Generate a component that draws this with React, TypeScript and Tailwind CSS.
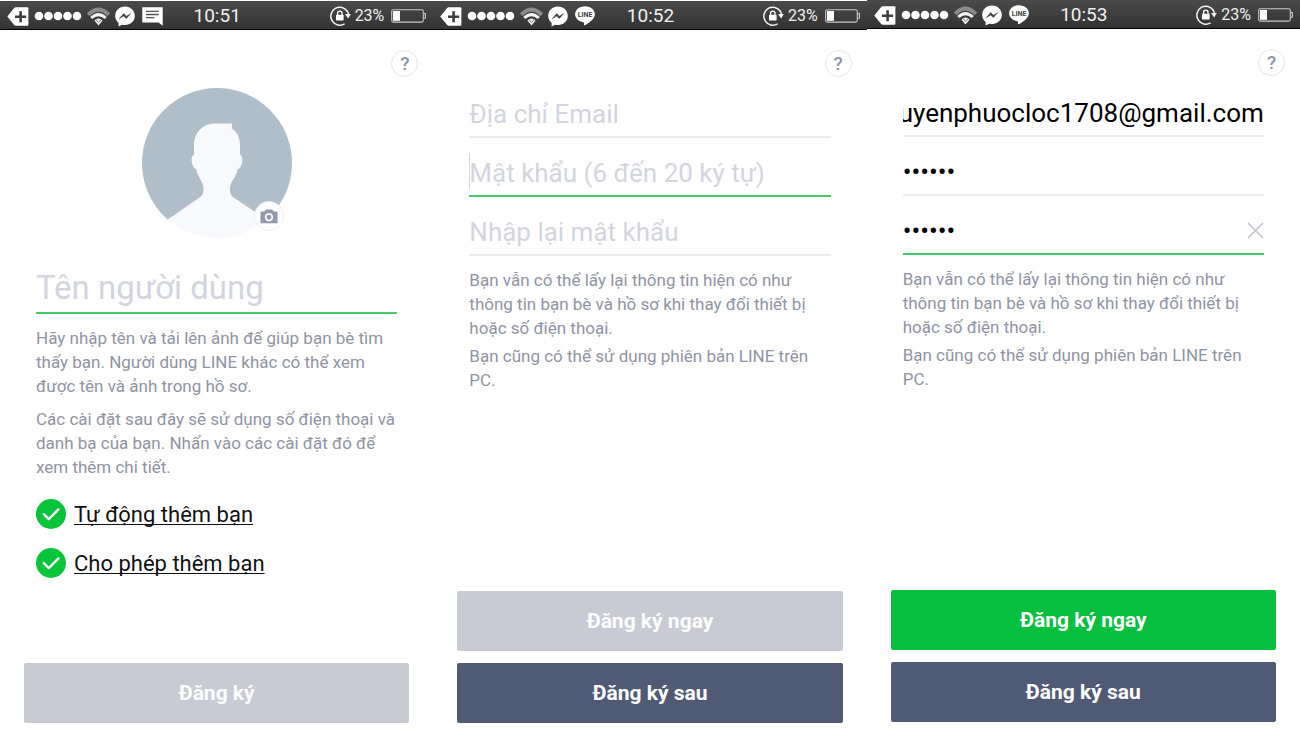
import { useEffect, useId, useRef, useState, type ReactNode } from "react";

function BackPlusIcon() {
  return (
    <svg viewBox="0 0 22 19" className="h-[19px] w-[22px]" aria-hidden="true">
      <path d="M0.3 9.5 7.2 0.9Q7.8 0.2 8.8 0.2H20.4Q21.4 0.2 21.4 1.2V17.8Q21.4 18.8 20.4 18.8H8.8Q7.8 18.8 7.2 18.1Z" fill="#fff" />
      <path d="M13.6 4.2V15.2M8 9.7H19.2" stroke="#3f3f3f" strokeWidth="2.6" />
    </svg>
  );
}

function SignalDots() {
  return (
    <svg viewBox="0 0 48 10" className="h-[10px] w-[48px]" aria-hidden="true">
      {[5, 14.5, 24, 33.5, 43].map((cx) => (
        <circle key={cx} cx={cx} cy="5" r="4.3" fill="#fff" />
      ))}
    </svg>
  );
}

function WifiIcon() {
  return (
    <svg viewBox="0 0 23 19" className="h-[19px] w-[23px]" aria-hidden="true" fill="none">
      <path d="M1.2 7.8Q11.5-2.4 21.8 7.8" stroke="#8b8b8b" strokeWidth="4" />
      <path d="M4.2 11Q11.5 4.2 18.8 11" stroke="#f2f2f2" strokeWidth="3" />
      <path d="M7.4 13.4Q11.5 9.4 15.6 13.4L11.5 18.4Z" fill="#f2f2f2" />
      <path d="M9 12.8 11.5 15.2 14 12.8" stroke="#666" strokeWidth="0.9" />
    </svg>
  );
}

function MessengerIcon() {
  return (
    <svg viewBox="0 0 20 21" className="h-[21px] w-[20px]" aria-hidden="true">
      <path d="M10 0.4C4.5 0.4 0.2 4.5 0.2 9.8 0.2 12.8 1.5 15.2 3.6 16.9V20.6L7 18.7C8 19 9 19.1 10 19.1 15.5 19.1 19.8 15 19.8 9.8 19.8 4.5 15.5 0.4 10 0.4Z" fill="#fff" />
      <path d="M4.4 12.6 8.8 7.6 11.4 10.3 15.6 7.7 11.3 12.5 8.7 9.9Z" fill="#3f3f3f" stroke="#3f3f3f" strokeWidth="0.6" />
    </svg>
  );
}

function MessageIcon() {
  return (
    <svg viewBox="0 0 21 19" className="h-[19px] w-[21px]" aria-hidden="true">
      <path d="M0.3 0.3H20.7V18.7L16.6 15.4H0.3Z" fill="#fff" />
      <path d="M4 4.4H16.8M4 7.5H16.8M4 10.6H12.4" stroke="#555" strokeWidth="1.3" />
    </svg>
  );
}

function LineIcon() {
  return (
    <svg viewBox="0 0 20 20" className="h-[20px] w-[20px]" aria-hidden="true">
      <path d="M10 0.3C4.6 0.3 0.1 3.9 0.1 8.3 0.1 12.3 3.6 15.5 8.4 16.2 9.3 16.4 9.2 17 9 18.4 8.9 19.1 9.3 19.7 10.3 19 13.5 17.2 19.9 13.3 19.9 8.3 19.9 3.9 15.4 0.3 10 0.3Z" fill="#fff" />
      <text x="10" y="10.7" textAnchor="middle" className="fill-[#3f3f3f] font-['Roboto',sans-serif] text-[7px] font-bold">
        LINE
      </text>
    </svg>
  );
}

function RotationLockIcon() {
  return (
    <svg viewBox="0 0 21 20" className="h-[20px] w-[21px]" aria-hidden="true" fill="none">
      <path d="M14.6 17.8A9 9 0 1 1 17.6 5.6" stroke="#f2f2f2" strokeWidth="1.5" />
      <path d="M15 8H20.8L18.2 12.4Z" fill="#f2f2f2" />
      <path d="M16.9 4.6A9 9 0 0 1 18.6 8.6" stroke="#f2f2f2" strokeWidth="1.5" />
      <rect x="6" y="8.8" width="7.6" height="5.6" rx="0.6" fill="#fff" />
      <path d="M7.6 9V7.3A2.2 2.2 0 0 1 12 7.3V9" stroke="#fff" strokeWidth="1.3" />
    </svg>
  );
}

function BatteryIcon() {
  return (
    <svg viewBox="0 0 36 14" className="h-[14px] w-[36px]" aria-hidden="true" fill="none">
      <rect x="0.7" y="0.7" width="31.6" height="12.4" rx="1.6" stroke="#c9c9c9" strokeWidth="1.1" />
      <rect x="2" y="2" width="7" height="9.8" fill="#fff" />
      <path d="M33 4.6H34.4V9.2H33" stroke="#c9c9c9" strokeWidth="1.1" />
    </svg>
  );
}

function StatusBar({ time, notification }: { time: string; notification: ReactNode }) {
  return (
    <header className="grid h-[29px] grid-cols-[1fr_auto_1fr] items-center border-b border-black bg-linear-to-b from-[#4a4a4a] to-[#333] pt-[2px] pr-[6px] pl-[7px] text-[#efefef]">
      <div className="flex items-center gap-[5px]">
        <BackPlusIcon />
        <SignalDots />
        <WifiIcon />
        <MessengerIcon />
        <span className="ml-[2px]">{notification}</span>
      </div>
      <time className="text-[19px] leading-6">{time}</time>
      <div className="flex items-center justify-end">
        <RotationLockIcon />
        <span className="mr-[7px] ml-1 text-[16px] leading-6">23%</span>
        <BatteryIcon />
      </div>
    </header>
  );
}

function Phone({
  time,
  notification,
  edge,
  actions,
  children,
}: {
  time: string;
  notification: ReactNode;
  edge: "top" | "bottom";
  actions: ReactNode;
  children: ReactNode;
}) {
  return (
    <section className={edge === "top" ? "flex min-w-0 flex-col pt-px" : "flex min-w-0 flex-col pb-px"}>
      <StatusBar time={time} notification={notification} />
      <div className="flex justify-end pt-5 pr-[15px]">
        <button
          type="button"
          aria-label="?"
          className="flex size-[27px] items-center justify-center rounded-full border border-[#e3e4ea] text-[19px] leading-6 font-medium text-[#9095a6]"
        >
          ?
        </button>
      </div>
      <div className="flex flex-1 flex-col px-9">{children}</div>
      <div className="flex flex-col gap-3 px-6 pb-[13px]">{actions}</div>
    </section>
  );
}

function ActionButton({ tone, children }: { tone: "muted" | "green" | "navy"; children: ReactNode }) {
  const tones = {
    muted: "bg-[#c8cad4]",
    green: "bg-[#07bf3f]",
    navy: "bg-[#505a75]",
  };
  return (
    <button type="button" className={`h-[60px] w-full rounded-[2px] text-[21px] leading-6 font-bold text-white ${tones[tone]}`}>
      {children}
    </button>
  );
}

function Field({
  label,
  type = "text",
  value = "",
  active = false,
  caret = false,
  clearable = false,
}: {
  label: string;
  type?: string;
  value?: string;
  active?: boolean;
  caret?: boolean;
  clearable?: boolean;
}) {
  const [text, setText] = useState(value);
  const ref = useRef<HTMLInputElement>(null);

  // Long values show their end, as they do right after typing.
  useEffect(() => {
    if (ref.current) ref.current.scrollLeft = ref.current.scrollWidth;
  }, []);

  return (
    <div className={`relative flex h-[59px] items-center border-b-2 pt-3 ${active ? "border-[#41c96b]" : "border-[#ececef]"}`}>
      {caret && <span className="absolute top-[15px] left-0 h-9 w-px bg-[#d5d6dc]" />}
      <input
        ref={ref}
        type={type}
        aria-label={label}
        placeholder={label}
        value={text}
        onChange={(e) => setText(e.target.value)}
        className="h-10 w-full min-w-0 flex-1 bg-transparent text-[26px] text-black outline-none placeholder:text-[#d3d5de]"
      />
      {clearable && (
        <button type="button" aria-label="×" onClick={() => setText("")}>
          <svg viewBox="0 0 17 17" className="size-[17px]" aria-hidden="true">
            <path d="M1 1 16 16M16 1 1 16" stroke="#c3c5d0" strokeWidth="1.7" />
          </svg>
        </button>
      )}
    </div>
  );
}

function Notes({ children }: { children: ReactNode }) {
  return <div className="text-[17px] leading-6 text-[#8f93a3]">{children}</div>;
}

function Option({ children }: { children: ReactNode }) {
  const id = useId();
  const [checked, setChecked] = useState(true);
  return (
    <div className="flex items-center gap-2">
      <span className="relative size-[30px]">
        <input
          id={id}
          type="checkbox"
          checked={checked}
          onChange={(e) => setChecked(e.target.checked)}
          className="block size-[30px] appearance-none rounded-full bg-[#c8cad4] checked:bg-[#07c53b]"
        />
        <svg viewBox="0 0 30 30" className="pointer-events-none absolute inset-0" aria-hidden="true">
          <path d="M7.8 15.2 12.8 20.2 22.4 10.4" fill="none" stroke="#fff" strokeWidth="2.4" strokeLinecap="round" strokeLinejoin="round" />
        </svg>
      </span>
      <label
        htmlFor={id}
        className="pt-[2px] text-[22px] leading-7 text-[#111] underline decoration-1 underline-offset-[2px] [text-decoration-skip-ink:none]"
      >
        {children}
      </label>
    </div>
  );
}

function Avatar() {
  return (
    <div className="relative mt-[11px] size-[150px] self-center">
      <svg viewBox="0 0 150 150" className="size-[150px]" aria-hidden="true">
        <defs>
          <clipPath id="avatar-disc">
            <circle cx="75" cy="75" r="75" />
          </clipPath>
        </defs>
        <g clipPath="url(#avatar-disc)">
          <path d="M0 0H150V132H0Z" fill="#b0bec9" />
          <path
            d="M72 35.6H90.3L89.6 40.2C94.5 43 97.8 49 98 56V66.4C101.6 67.5 101.3 79 95.6 81.5C94.5 89 88.4 93 88 100C88 106 88.6 107.5 93 110.6L117 126.5Q123 130.5 126 134V150H22V134Q26.5 130.5 33 126.5L56 110.6C60.6 107.5 61.5 106 61.5 100C61 93 55.5 89 54.4 81.5C48.7 79 48.4 67.5 52 66.4V56C52.2 45 60.5 36 72 35.6Z"
            fill="#f8f9fc"
          />
        </g>
      </svg>
      <button
        type="button"
        aria-label="Ảnh"
        className="absolute right-2 bottom-[7px] flex size-[30px] items-center justify-center rounded-full border border-[#eff0f5] bg-[#fdfdff]"
      >
        <svg viewBox="0 0 18 15" className="h-[15px] w-[18px]" aria-hidden="true">
          <path d="M0.5 2.6H4.4L5.8 0.4H12.2L13.6 2.6H17.5V14.3H0.5Z" fill="#9299ab" />
          <circle cx="9" cy="8.2" r="3.3" fill="none" stroke="#fff" strokeWidth="1.7" />
        </svg>
      </button>
    </div>
  );
}

function AccountNotes() {
  return (
    <Notes>
      <p className="mt-3">
        Bạn vẫn có thể lấy lại thông tin hiện có như thông tin bạn bè và hồ sơ khi thay đổi thiết bị hoặc số điện thoại.
      </p>
      <p className="mt-1">Bạn cũng có thể sử dụng phiên bản LINE trên PC.</p>
    </Notes>
  );
}

export default function App() {
  return (
    <main className="grid min-h-screen grid-cols-3 bg-white font-['Roboto',sans-serif]">
      <Phone time="10:51" notification={<MessageIcon />} edge="top" actions={<ActionButton tone="muted">Đăng ký</ActionButton>}>
        <Avatar />
        <input
          type="text"
          aria-label="Tên người dùng"
          placeholder="Tên người dùng"
          className="mt-5 h-14 w-full border-b-2 border-[#41c96b] bg-transparent pt-1 text-[33px] text-black outline-none placeholder:text-[#d3d5de]"
        />
        <Notes>
          <p className="mt-3">
            Hãy nhập tên và tải lên ảnh để giúp bạn bè tìm thấy bạn. Người dùng LINE khác có thể xem được tên và ảnh trong hồ sơ.
          </p>
          <p className="mt-[9px]">
            Các cài đặt sau đây sẽ sử dụng số điện thoại và danh bạ của bạn. Nhấn vào các cài đặt đó để xem thêm chi tiết.
          </p>
        </Notes>
        <div className="mt-5 flex flex-col gap-[19px]">
          <Option>Tự động thêm bạn</Option>
          <Option>Cho phép thêm bạn</Option>
        </div>
      </Phone>

      <Phone
        time="10:52"
        notification={<LineIcon />}
        edge="top"
        actions={
          <>
            <ActionButton tone="muted">Đăng ký ngay</ActionButton>
            <ActionButton tone="navy">Đăng ký sau</ActionButton>
          </>
        }
      >
        <div className="mt-[2px]">
          <Field label="Địa chỉ Email" type="email" />
          <Field label="Mật khẩu (6 đến 20 ký tự)" type="password" active caret />
          <Field label="Nhập lại mật khẩu" type="password" />
        </div>
        <AccountNotes />
      </Phone>

      <Phone
        time="10:53"
        notification={<LineIcon />}
        edge="bottom"
        actions={
          <>
            <ActionButton tone="green">Đăng ký ngay</ActionButton>
            <ActionButton tone="navy">Đăng ký sau</ActionButton>
          </>
        }
      >
        <div className="mt-[2px]">
          <Field label="Địa chỉ Email" value="uyenphuocloc1708@gmail.com" />
          <Field label="Mật khẩu (6 đến 20 ký tự)" type="password" value="123456" />
          <Field label="Nhập lại mật khẩu" type="password" value="123456" active clearable />
        </div>
        <AccountNotes />
      </Phone>
    </main>
  );
}
